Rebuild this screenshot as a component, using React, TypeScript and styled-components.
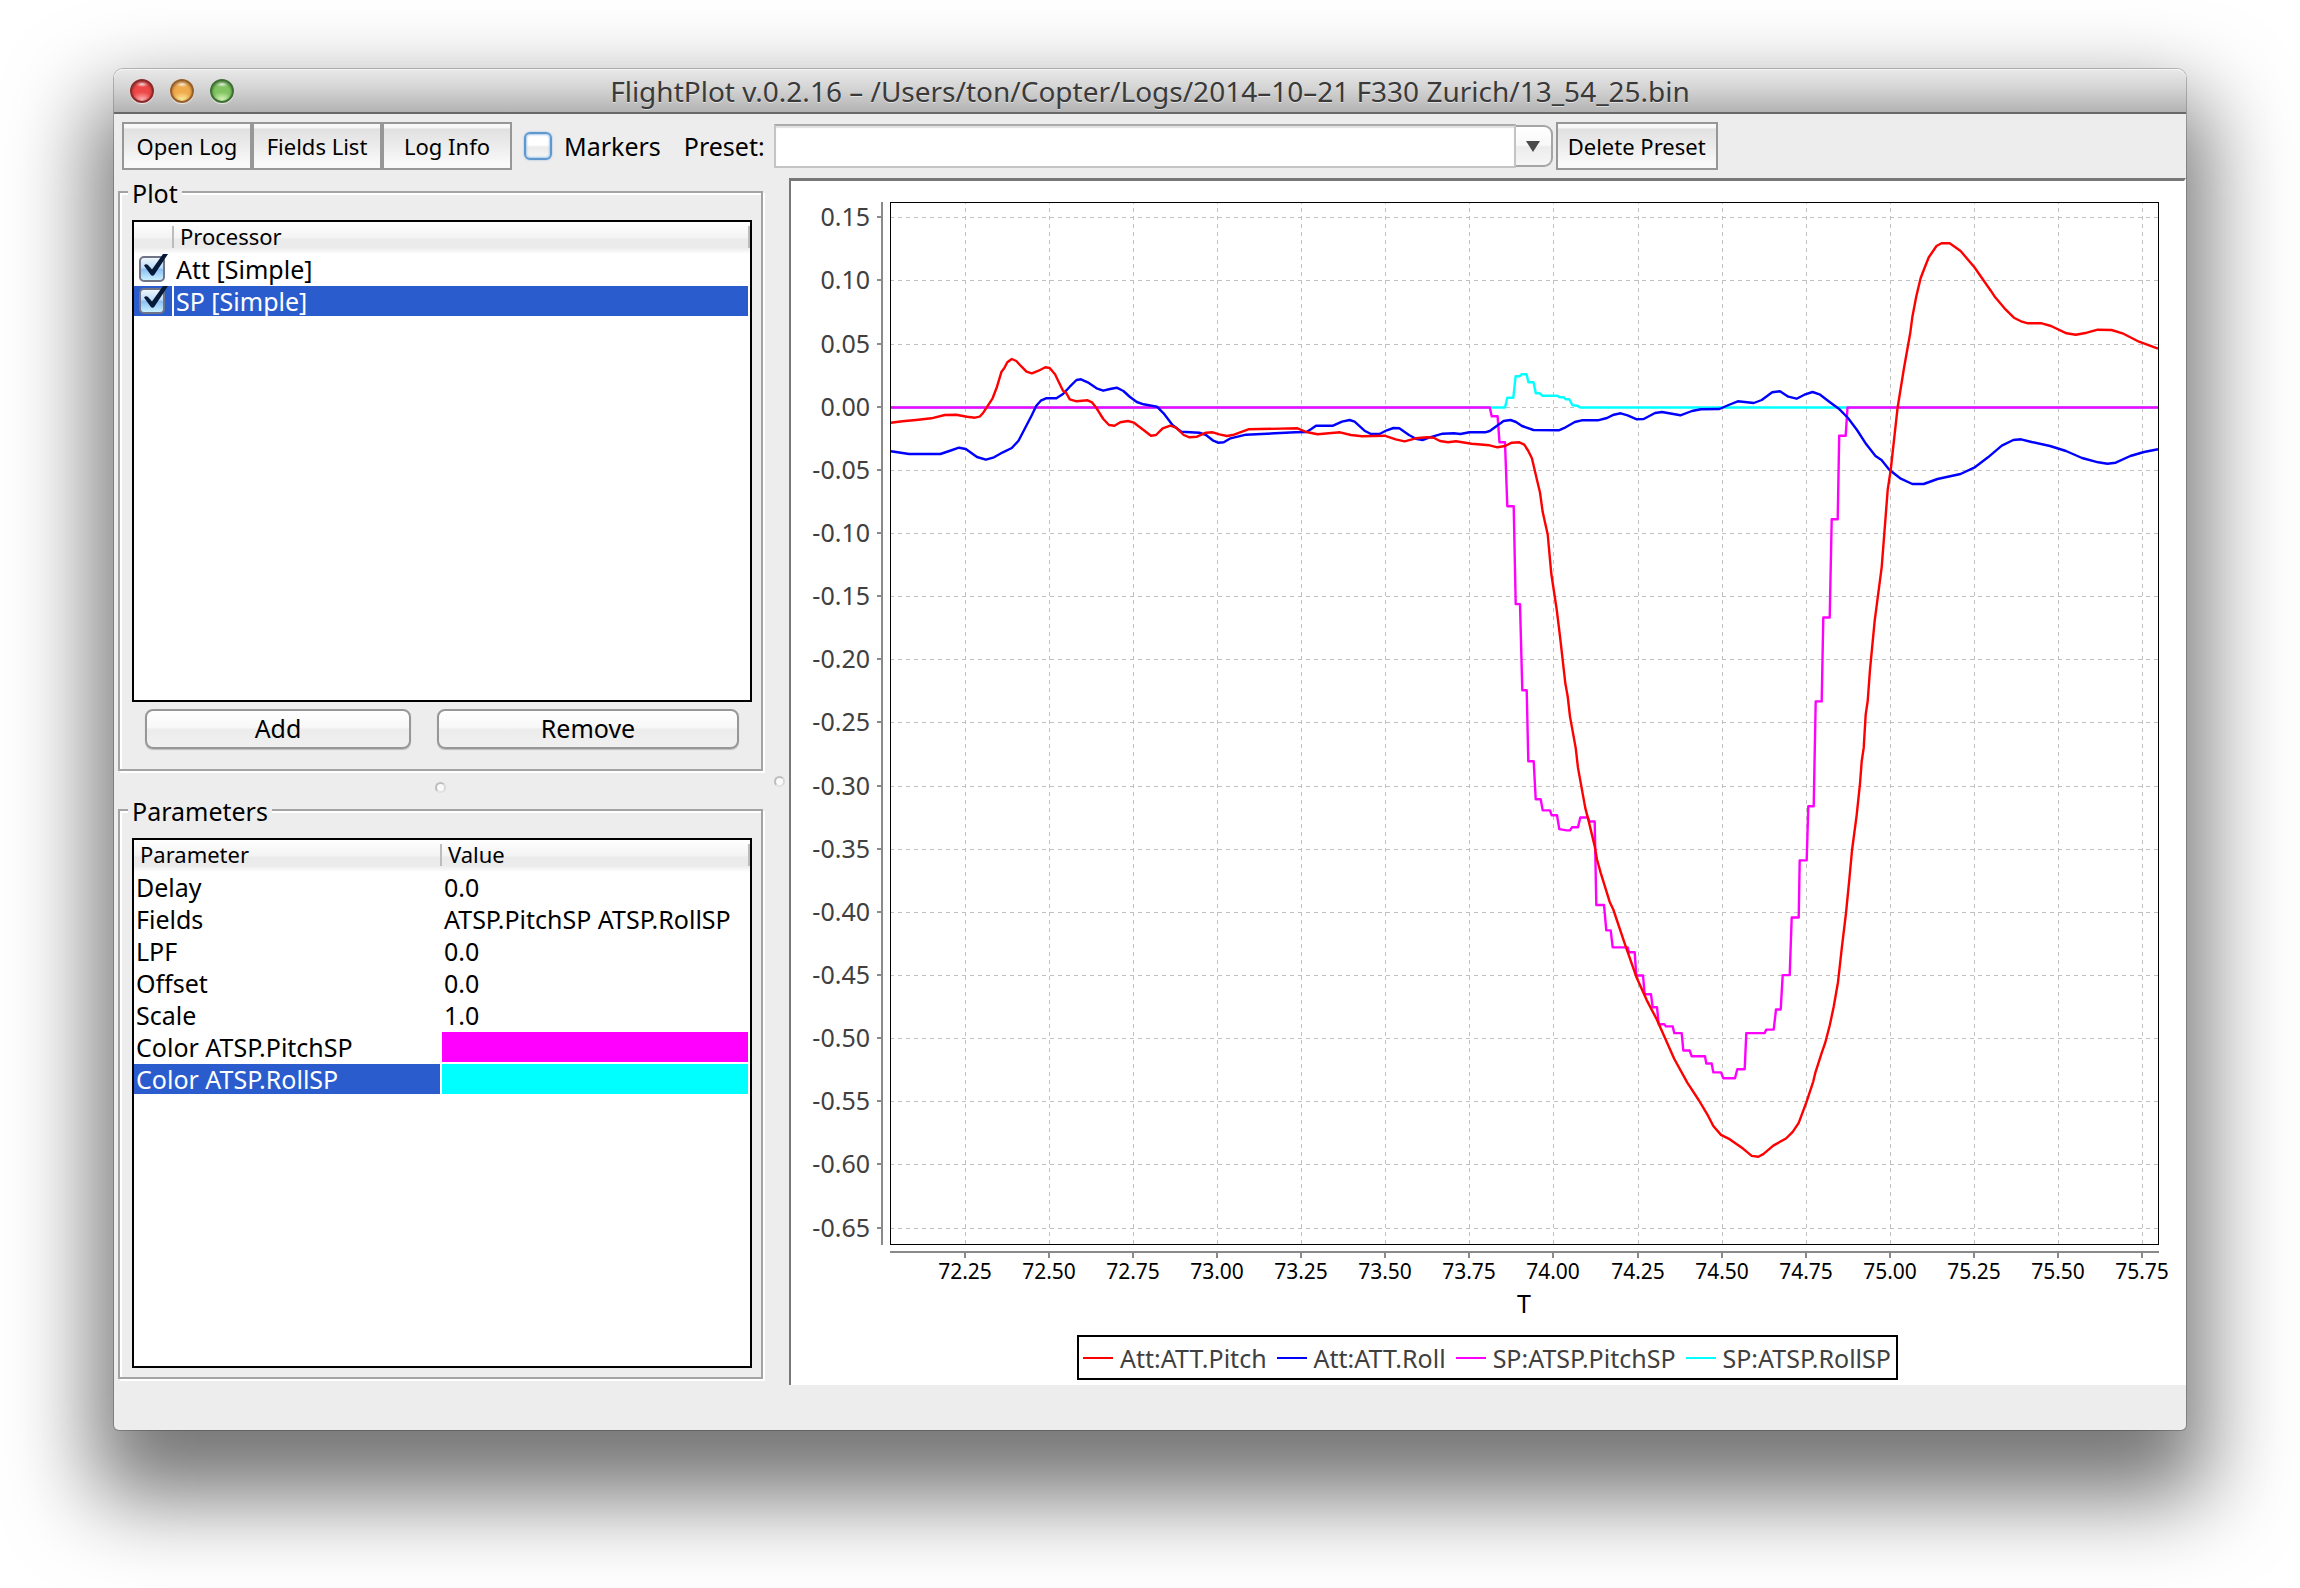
import React, { useState } from "react";
import styled, { createGlobalStyle, css } from "styled-components";

const uiFont = `"Noto Sans", "Open Sans", sans-serif`;

const GlobalStyle = createGlobalStyle`
  *, *::before, *::after { box-sizing: border-box; }
  body { margin: 0; background: #fff; font-family: ${uiFont}; color: #000; }
  button, input, select { font: inherit; color: inherit; }
`;

/* ---------- window ---------- */

const Desktop = styled.div`
  padding: 69px 114px 158px;
  overflow: hidden;
`;

const Window = styled.main`
  display: flex;
  flex-direction: column;
  border-radius: 9px 9px 5px 5px;
  background: #ededed;
  box-shadow: 0 0 0 1px rgba(0, 0, 0, 0.22), 0 48px 86px 20px rgba(0, 0, 0, 0.54);
`;

const TitleBar = styled.header`
  display: grid;
  grid-template-columns: 1fr auto 1fr;
  align-items: center;
  height: 45px;
  padding: 0 16px;
  border-bottom: 2px solid #686868;
  border-radius: 9px 9px 0 0;
  background: linear-gradient(#e9e9e9, #d4d4d4 45%, #b3b3b3);
  box-shadow: inset 0 1px 0 #f4f4f4;
`;

const Lights = styled.div`
  display: flex;
  gap: 16px;
`;

const Light = styled.button<{ $rim: string; $body: string; $glow: string }>`
  width: 24px;
  height: 24px;
  padding: 0;
  border: 2px solid ${(p) => p.$rim};
  border-radius: 50%;
  background:
    radial-gradient(ellipse 7px 3px at 50% 3px, rgba(255, 255, 255, 0.9), rgba(255, 255, 255, 0) 100%),
    radial-gradient(ellipse 11px 9px at 50% 100%, ${(p) => p.$glow}, transparent 100%),
    ${(p) => p.$body};
  box-shadow: 0 1px 1px rgba(255, 255, 255, 0.7), inset 0 1px 3px ${(p) => p.$rim};
`;

const Title = styled.h1`
  margin: 0;
  font-size: 28px;
  font-weight: 400;
  line-height: 40px;
  color: #3a3a3a;
  text-shadow: 0 1px 0 rgba(255, 255, 255, 0.5);
  white-space: nowrap;
`;

/* ---------- toolbar ---------- */

const Toolbar = styled.div`
  display: flex;
  align-items: center;
  height: 64px;
  padding: 0 8px;
  font-size: 25px;
`;

const ToolButton = styled.button<{ $wide?: boolean }>`
  flex: none;
  width: ${(p) => (p.$wide ? 162 : 130)}px;
  height: 48px;
  padding: 0;
  border: 2px solid #979797;
  background: linear-gradient(#fafafa 0, #f7f7f7 8%, #e1e1e1 12%, #ececec 50%, #f9f9f9 90%);
  font-size: 22px;
  line-height: 32px;
  white-space: nowrap;
`;

const MarkersLabel = styled.label`
  display: flex;
  align-items: center;
  gap: 12px;
  margin: 0 23px 0 12px;
`;

const MarkersBox = styled.input`
  appearance: none;
  width: 28px;
  height: 28px;
  margin: 0;
  border: 2px solid #5f97cf;
  border-radius: 6px;
  background: linear-gradient(#fff 0, #fff 45%, #ececec 55%, #f6f6f6);
  box-shadow: inset 0 0 2px 1px #a9cbec, 0 0 2px #8db6dc;
  &:checked { background: #8fc0f2; }
`;

const Combo = styled.div`
  display: flex;
  align-items: center;
  flex: 0 1 779px;
  margin: 0 3px 0 9px;
`;

const ComboInput = styled.input`
  flex: 1;
  min-width: 0;
  height: 44px;
  padding: 0 8px;
  border: 2px solid #c4c4c4;
  border-top-color: #ababab;
  border-radius: 0;
  outline: none;
  background: #fff;
  box-shadow: inset 0 2px 1px #e2e2e2;
`;

const ComboArrow = styled.button`
  display: grid;
  place-items: center;
  width: 37px;
  height: 42px;
  padding: 0;
  border: 2px solid #a5a5a5;
  border-left: 0;
  border-radius: 0 9px 9px 0;
  background: linear-gradient(#fff 0, #f8f8f8 48%, #ececec 52%, #f6f6f6);
`;

/* ---------- split panes ---------- */

const Body = styled.div`
  display: grid;
  grid-template-columns: minmax(0, 655fr) 20px minmax(0, 1397fr);
`;

const Sidebar = styled.div`
  display: flex;
  flex-direction: column;
  padding: 0 6px 6px 4px;
`;

const Divider = styled.div<{ $horizontal?: boolean }>`
  display: grid;
  place-items: center;
  ${(p) => p.$horizontal && css`height: 20px; margin-top: 5px; padding-top: 3px;`}
`;

const Grip = styled.span`
  width: 11px;
  height: 11px;
  border: 2px solid #bdbdbd;
  border-right-color: #d8d8d8;
  border-bottom-color: #e2e2e2;
  border-radius: 50%;
  background: #fafafa;
`;

const Group = styled.fieldset<{ $grow: number }>`
  display: flex;
  flex-direction: column;
  flex: ${(p) => p.$grow} 1 0;
  min-width: 0;
  margin: 0;
  padding: 14px 9px 9px 12px;
  border: 2px solid #a3a3a3;
  box-shadow: inset 2px 2px 0 #fff, 2px 2px 0 #fff;
`;

const GroupTitle = styled.legend`
  margin-left: -4px;
  padding: 3px 4px 0;
  background: #ededed;
  font-size: 25px;
  line-height: 25px;
`;

const TableBox = styled.div`
  flex: 1;
  min-height: 0;
  border: 2px solid #000;
  background: #fff;
`;

const Table = styled.table`
  width: 100%;
  border-spacing: 0;
  table-layout: fixed;
`;

const HeadCell = styled.th<{ $width?: string }>`
  width: ${(p) => p.$width ?? "auto"};
  height: 32px;
  padding: 0 6px 4px;
  background:
    linear-gradient(#bcbcbc, #bcbcbc) right 4px / 2px 22px no-repeat,
    linear-gradient(#fff 0, #f3f3f3 50%, #ebebeb 53%, #ebebeb 80%, #fff 100%);
  font-size: 22px;
  font-weight: 400;
  line-height: 28px;
  text-align: left;
`;

const Cell = styled.td<{ $selected?: boolean }>`
  height: 32px;
  padding: 0 0 0 2px;
  border: solid #fff;
  border-width: 0 2px 2px 0;
  background: ${(p) => (p.$selected ? "#2b5ccd" : "#fff")};
  background-clip: padding-box;
  color: ${(p) => (p.$selected ? "#fff" : "#000")};
  font-size: 25px;
  line-height: 30px;
  white-space: nowrap;
`;

const SwatchCell = styled(Cell)<{ $color: string }>`
  background-color: ${(p) => p.$color};
`;

const RowCheck = styled.label`
  display: block;
  position: relative;
  width: 26px;
  height: 26px;
  margin-left: 3px;
`;

const RowCheckInput = styled.input`
  appearance: none;
  display: block;
  width: 26px;
  height: 26px;
  margin: 0;
  border: 2px solid #6f7487;
  border-radius: 5px;
  background: linear-gradient(#eef5fd 0, #bcdaf7 45%, #8cc0f4 52%, #c9f0ff);
`;

const Tick = styled.svg`
  position: absolute;
  left: 0;
  top: 0;
  overflow: visible;
  pointer-events: none;
`;

const ButtonRow = styled.div`
  display: grid;
  grid-template-columns: 266fr 302fr;
  gap: 26px;
  margin: 7px 13px 11px;
`;

const PushButton = styled.button`
  height: 40px;
  padding: 0 0 2px;
  border: 2px solid #979797;
  border-radius: 8px;
  background: linear-gradient(#fff 0, #f8f8f8 45%, #ececec 52%, #f0f0f0);
  box-shadow: 0 1px 1px rgba(0, 0, 0, 0.2);
  font-size: 25px;
  line-height: 32px;
`;

/* ---------- chart ---------- */

const ChartPanel = styled.section`
  display: flex;
  flex-direction: column;
  align-items: center;
  padding-bottom: 5px;
  border-style: solid;
  border-width: 3px 2px 0 2px;
  border-color: #787878 #fff transparent #787878;
  background: #fff;
`;

const Plot = styled.svg`
  display: block;
  width: 100%;
  height: auto;
`;

const Legend = styled.ul`
  display: flex;
  gap: 10px;
  height: 45px;
  margin: 0;
  padding: 0 5px 0 4px;
  border: 2px solid #000;
  background: #fff;
  list-style: none;
  font-size: 25px;
  color: #404040;
`;

const LegendItem = styled.li<{ $color: string }>`
  display: flex;
  align-items: center;
  gap: 7px;
  white-space: nowrap;
  &::before {
    content: "";
    width: 30px;
    height: 2px;
    background: ${(p) => p.$color};
  }
`;

const StatusBar = styled.footer`
  height: 45px;
`;

type Series = { name: string; color: string; points: string };

const series: Series[] = [
  {
    name: "Att:ATT.Pitch",
    color: "#ff0000",
    points:
      "891,422.7 902.4,421.3 916,420 931.4,418.3 944.8,415 956,414.7 967,416.7 975,417.7 979.6,416.7 982.8,413.3 987.2,406.7 992.6,398.3 997,386.7 1001.5,371.7 1004.2,368.3 1007.3,362.3 1011.8,359 1016.3,361 1021.6,366.7 1026.5,371.7 1031.9,373.3 1038.6,370.7 1045.3,367.3 1049.7,368 1055,374.3 1063,390.7 1066,392.7 1069.8,399.3 1076.5,401.3 1087.7,400.3 1092,402.3 1096.6,408.3 1103.3,419 1109,425 1114.5,425.7 1120.3,422.3 1127.9,421 1134,422.7 1143.5,430 1151,435.7 1156,435 1162.7,428.3 1170.3,425.7 1176,427.7 1183.7,435 1189.5,437.3 1197,436.7 1206,432.7 1212.7,432.3 1219.4,434.3 1227,436 1234,434.7 1248.4,429.3 1297.5,428.3 1306.4,432 1317.6,434.3 1340,432.3 1351,435 1362,436.3 1384.6,435.7 1395.7,439.3 1404.6,441.3 1415.8,438.3 1427,437.3 1433.7,437.7 1440,441 1448,442.3 1456,441.3 1471.6,443.7 1489.5,445.3 1497.5,447.3 1505,446 1511.8,442.7 1519.4,442.3 1524.3,444.7 1528.3,451 1531.9,458.3 1537,480 1540,492.5 1542.7,512.1 1547.7,534.5 1551.3,573.8 1556.7,609.5 1560,636.3 1565.3,683.1 1567.7,696.5 1570,716.6 1575.7,747.9 1578,767.9 1585.3,808.1 1588,818.4 1594.7,846.1 1597,859.5 1600.7,872.9 1609.7,901.9 1613.3,909.5 1625,944.3 1636.7,977.8 1646.7,1000.1 1656.7,1019.3 1674.3,1059 1687.3,1082.7 1699,1100.5 1708.3,1116.2 1713.3,1126 1721,1134.9 1730,1139.4 1743.3,1148.8 1751.7,1155.9 1758.3,1156.8 1763.3,1154.1 1773.3,1145.6 1786,1138.5 1792.7,1131.8 1798.7,1122.9 1806.7,1101.4 1813.3,1081.3 1815.3,1072.9 1821.7,1052.8 1825.3,1042.5 1829.7,1025.5 1833.7,1006.8 1838,982.2 1841.7,948.8 1846,913 1849.3,879.6 1852,850.5 1856.7,814.8 1860,783.6 1861.7,761.3 1863.7,747.9 1865.7,714.4 1867.7,701 1870,669.7 1874.7,620.6 1881.7,567.1 1885.7,515.7 1887.7,489.8 1890.7,470 1897.6,407.7 1904,368 1910.2,333.3 1912.4,316.7 1916.2,296.7 1920.6,278.3 1925,266.7 1928.8,257.3 1936.5,246 1941.5,243.3 1949.7,243.3 1960.6,251 1974.4,267.3 1982.6,279 1990.8,290.7 1995.2,297.3 2004.5,308.3 2013.9,317.7 2021,321.3 2028,323.3 2041.8,323.3 2051,326 2066.5,333.3 2075.8,334.7 2086.8,332.7 2097.8,329.7 2111.5,330 2122.5,333.3 2139,341.7 2158,348.7",
  },
  {
    name: "Att:ATT.Roll",
    color: "#0000ff",
    points:
      "891,451.3 909,454 940.4,454 949.3,451 959,447.7 965.8,449 977,457 985.9,459.7 994,457.3 1002.9,452.3 1011.8,448 1018.5,440.7 1025,428.3 1031.9,415 1036.3,405.7 1040.8,400.7 1046,398.3 1056.4,398.3 1063,394 1069.8,386.7 1076.5,380 1081,379.3 1087.7,382.3 1096.6,388.3 1103.3,390.7 1110,389 1116.7,387.7 1123.4,391 1130,397 1136.8,402 1143.5,404.3 1156.9,406.7 1163.6,413.3 1172.5,425 1181.4,431.7 1199.3,432.7 1206,435 1212.7,440.3 1218,442.7 1223.8,442.3 1230.5,438.3 1246,434.7 1295.3,432.3 1306.4,432 1310.9,429.3 1316,425.7 1333,425.7 1342,421.7 1349.7,420 1354.6,421.7 1364.5,430.7 1371,434 1380,433.7 1386.8,430.3 1393.5,428 1399.3,428.3 1409,435 1415.8,438.7 1422.5,440 1429,437.7 1442.6,433.7 1453.8,433.3 1460.4,434 1469.4,432.3 1485,432.3 1489.8,431 1503.6,421 1510.5,420 1516,422 1522,426 1533.5,430 1558.7,430.3 1565.6,427.3 1574.8,422 1581.7,420.3 1597.7,420.3 1607,418 1613.8,414.7 1620.7,413.3 1627.6,415.3 1636.8,419.3 1643.7,419 1655,413 1662,412 1680.4,415.3 1691.9,411 1701,409.3 1719.4,409 1728.6,405 1737.8,401.3 1753.8,403 1761.7,400 1772.2,392.3 1780,391.3 1788.3,396.7 1796.6,398.7 1804.4,394.7 1812.6,392 1819.5,394.3 1829.6,402 1838.8,408.7 1848,418 1857,430 1866.3,444.3 1875.5,456 1881.5,460 1889.3,469.7 1900.8,478.7 1912.3,484 1923.7,484 1937.5,479 1960.5,474 1974.2,467.7 1988,457.3 2001.8,445.7 2013.3,440 2021,439.3 2031.6,442 2050,446 2066,451 2082,458 2098.2,462.3 2107.4,463.7 2115.7,462.7 2130.3,456 2144,452 2158,449.3",
  },
  {
    name: "SP:ATSP.PitchSP",
    color: "#ff00ff",
    points:
      "891,407.5 1489.8,407.5 1491.7,416.3 1497.6,416.3 1499.5,442.3 1505,442.3 1507.3,506.3 1513.7,506.3 1515.7,604.1 1520,604.1 1522.3,690.3 1526.7,690.3 1528.3,761.3 1533.7,761.3 1535.7,799.2 1540.7,799.2 1542.7,810.4 1550,810.4 1551.7,815.3 1557,815.3 1559.3,829.1 1566.7,830.4 1570,830.4 1572,827.3 1578,827.3 1580.3,817.5 1588,817.5 1589.3,821.5 1594.7,821.5 1596.3,905 1604,905 1606.3,930.4 1610.7,930.4 1612.7,947.4 1627.7,947.4 1629,952.3 1634.7,952.3 1636.3,975.5 1643,975.5 1644.7,994.3 1651,994.3 1652.7,1007.2 1657,1007.2 1658.7,1024.2 1664.3,1024.2 1666,1026.4 1672.7,1026.4 1674.3,1033.1 1681.7,1033.1 1683.3,1050.5 1689.7,1050.5 1691.7,1056.3 1705,1056.3 1706.3,1063.5 1711.7,1063.5 1713.3,1072.4 1721,1072.4 1723.3,1078.2 1735,1078.2 1737.3,1069.3 1744.7,1069.3 1746.3,1033.1 1764.7,1033.1 1766.3,1029.6 1773.7,1029.6 1776,1009.5 1780.7,1009.5 1782.7,975.1 1789.7,975.1 1791.7,917.5 1798.7,917.5 1799.7,860.4 1806.7,860.4 1808.3,806.3 1813.7,806.3 1815.7,701.4 1821.7,701.4 1823.3,617.5 1829.7,617.5 1831.7,519.3 1837.7,519.3 1839.2,435.7 1845.7,435.7 1847.5,407.5 2158,407.5",
  },
  {
    name: "SP:ATSP.RollSP",
    color: "#00ffff",
    points:
      "891,407.5 1505,407.5 1507.3,397.7 1513.3,397.7 1515.6,376.3 1519.7,376.3 1521.5,374.3 1526.6,374.3 1528.4,382.3 1533.5,382.3 1535.8,393.3 1539.9,393.3 1542.2,395.7 1557.3,395.7 1559.6,397.3 1563.8,397.3 1565.6,399.3 1569.3,399.3 1572.5,405.3 1577.5,405.7 1580.3,407.5 2158,407.5",
  },
];

const plotArea = { left: 890, right: 2158, top: 202, bottom: 1244 };

const xTicks = Array.from({ length: 15 }, (_, i) => ({
  label: (72.25 + i * 0.25).toFixed(2),
  x: Math.round(964.6 + i * 84.12),
}));

const yTicks = Array.from({ length: 17 }, (_, i) => ({
  label: ((15 - i * 5) / 100).toFixed(2),
  y: Math.round(217.3 + i * 63.14),
}));

function FlightChart() {
  const { left, right, top, bottom } = plotArea;
  return (
    <Plot viewBox="791 181 1393 1154" role="img" aria-label="Attitude and setpoints over time">
      <g stroke="#c0c0c0" strokeWidth="1" strokeDasharray="4 4" shapeRendering="crispEdges">
        {xTicks.map((t) => (
          <line key={t.label} x1={t.x + 0.5} x2={t.x + 0.5} y1={bottom} y2={top} />
        ))}
        {yTicks.map((t) => (
          <line key={t.label} x1={left} x2={right} y1={t.y + 0.5} y2={t.y + 0.5} />
        ))}
      </g>
      {[...series].reverse().map((s) => (
        <polyline
          key={s.name}
          points={s.points}
          fill="none"
          stroke={s.color}
          strokeWidth="2.4"
          strokeLinejoin="round"
        />
      ))}
      <rect x={left + 0.5} y={top + 0.5} width={right - left} height={bottom - top} fill="none" stroke="#000" />
      <g stroke="#8a8a8a" strokeWidth="2">
        <line x1="882" x2="882" y1={top} y2={bottom + 1} />
        <line x1={left} x2={right + 1} y1="1252" y2="1252" />
        {xTicks.map((t) => (
          <line key={t.label} x1={t.x} x2={t.x} y1="1252" y2="1258" />
        ))}
        {yTicks.map((t) => (
          <line key={t.label} x1="877" x2="882" y1={t.y} y2={t.y} />
        ))}
      </g>
      <g fontSize="25" fill="#404040" textAnchor="end">
        {yTicks.map((t) => (
          <text key={t.label} x="870" y={t.y + 9}>{t.label}</text>
        ))}
      </g>
      <g fontSize="21" textAnchor="middle">
        {xTicks.map((t) => (
          <text key={t.label} x={t.x} y="1279">{t.label}</text>
        ))}
      </g>
      <text x="1524" y="1313" fontSize="25" textAnchor="middle">T</text>
    </Plot>
  );
}

/* ---------- data ---------- */

const processors = ["Att [Simple]", "SP [Simple]"];

const parameters: { name: string; value?: string; color?: string }[] = [
  { name: "Delay", value: "0.0" },
  { name: "Fields", value: "ATSP.PitchSP ATSP.RollSP" },
  { name: "LPF", value: "0.0" },
  { name: "Offset", value: "0.0" },
  { name: "Scale", value: "1.0" },
  { name: "Color ATSP.PitchSP", color: "#ff00ff" },
  { name: "Color ATSP.RollSP", color: "#00ffff" },
];

function ProcessorCheck({ name }: { name: string }) {
  const [on, setOn] = useState(true);
  return (
    <RowCheck>
      <RowCheckInput type="checkbox" aria-label={name} checked={on} onChange={() => setOn(!on)} />
      {on && (
        <Tick width="26" height="26" viewBox="0 0 26 26" aria-hidden="true">
          <path d="M5 9.5 Q7 7 9.5 9.5 L13 13.5 L24 -2 L29 -2 L15.5 18.5 Q13.5 21 11.5 18.5 Z" fill="#061a38" />
        </Tick>
      )}
    </RowCheck>
  );
}

export default function App() {
  const [selectedProcessor, setSelectedProcessor] = useState(1);
  const [selectedParameter, setSelectedParameter] = useState(6);
  return (
    <>
      <GlobalStyle />
      <Desktop>
        <Window>
          <TitleBar>
            <Lights>
              <Light aria-label="Close" $rim="#8c2a2a" $body="#ef4848" $glow="#ffc4c4" />
              <Light aria-label="Minimize" $rim="#96602a" $body="#f0ab4c" $glow="#fff7a8" />
              <Light aria-label="Zoom" $rim="#3f7034" $body="#82c462" $glow="#e4ffc8" />
            </Lights>
            <Title>FlightPlot v.0.2.16 – /Users/ton/Copter/Logs/2014–10–21 F330 Zurich/13_54_25.bin</Title>
          </TitleBar>

          <Toolbar>
            <ToolButton>Open Log</ToolButton>
            <ToolButton>Fields List</ToolButton>
            <ToolButton>Log Info</ToolButton>
            <MarkersLabel>
              <MarkersBox type="checkbox" />
              Markers
            </MarkersLabel>
            <label htmlFor="preset">Preset:</label>
            <Combo>
              <ComboInput id="preset" type="text" />
              <ComboArrow aria-label="Show presets">
                <svg width="14" height="12" viewBox="0 0 14 12" aria-hidden="true">
                  <path d="M0 1H14L7 12Z" fill="#4a4a4a" />
                </svg>
              </ComboArrow>
            </Combo>
            <ToolButton $wide>Delete Preset</ToolButton>
          </Toolbar>

          <Body>
            <Sidebar>
              <Group $grow={593}>
                <GroupTitle>Plot</GroupTitle>
                <TableBox>
                  <Table>
                    <thead>
                      <tr>
                        <HeadCell $width="40px" />
                        <HeadCell>Processor</HeadCell>
                      </tr>
                    </thead>
                    <tbody>
                      {processors.map((name, i) => (
                        <tr key={name} onClick={() => setSelectedProcessor(i)}>
                          <Cell $selected={i === selectedProcessor}>
                            <ProcessorCheck name={name} />
                          </Cell>
                          <Cell $selected={i === selectedProcessor}>{name}</Cell>
                        </tr>
                      ))}
                    </tbody>
                  </Table>
                </TableBox>
                <ButtonRow>
                  <PushButton>Add</PushButton>
                  <PushButton>Remove</PushButton>
                </ButtonRow>
              </Group>

              <Divider $horizontal>
                <Grip />
              </Divider>

              <Group $grow={583}>
                <GroupTitle>Parameters</GroupTitle>
                <TableBox>
                  <Table>
                    <thead>
                      <tr>
                        <HeadCell $width="50%">Parameter</HeadCell>
                        <HeadCell>Value</HeadCell>
                      </tr>
                    </thead>
                    <tbody>
                      {parameters.map((p, i) => (
                        <tr key={p.name} onClick={() => setSelectedParameter(i)}>
                          <Cell $selected={i === selectedParameter}>{p.name}</Cell>
                          {p.color ? <SwatchCell $color={p.color} /> : <Cell>{p.value}</Cell>}
                        </tr>
                      ))}
                    </tbody>
                  </Table>
                </TableBox>
              </Group>
            </Sidebar>

            <Divider>
              <Grip />
            </Divider>

            <ChartPanel>
              <FlightChart />
              <Legend>
                {series.map((s) => (
                  <LegendItem key={s.name} $color={s.color}>{s.name}</LegendItem>
                ))}
              </Legend>
            </ChartPanel>
          </Body>

          <StatusBar />
        </Window>
      </Desktop>
    </>
  );
}
